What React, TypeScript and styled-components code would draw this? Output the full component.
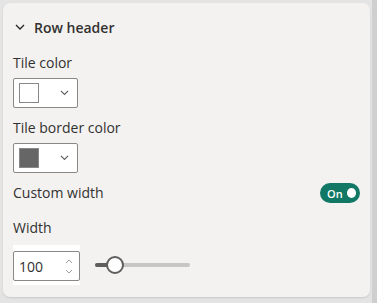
import { useState } from 'react';
import styled, { createGlobalStyle } from 'styled-components';

const GlobalStyle = createGlobalStyle`
	html, body {
		margin: 0;
		padding: 0;
		background: #e4e4e4;
		font-family: 'Open Sans', 'Noto Sans', sans-serif;
		color: #252423;
	}
`;

const Frame = styled.div`
	display: flex;
	width: 377px;
	height: 303px;
	box-sizing: border-box;
`;

const Panel = styled.section`
	margin: 3px 0 0 3px;
	width: 367px;
	height: 294px;
	box-sizing: border-box;
	background: #f3f2f1;
	border-radius: 7px;
	box-shadow: 0 1px 2px rgba(0, 0, 0, 0.12);
	padding: 12px 10px 0 10px;
	display: flex;
	flex-direction: column;
`;

const Rail = styled.div`
	margin-left: auto;
	width: 5px;
	height: 100%;
	background: #cfcfcf;
`;

const Header = styled.button`
	display: flex;
	align-items: center;
	gap: 9px;
	border: none;
	background: none;
	padding: 0 0 0 2px;
	height: 24px;
	font-family: inherit;
	font-size: 14px;
	font-weight: 600;
	color: #323130;
	cursor: pointer;
`;

const Label = styled.div<{ $top: number }>`
	margin-top: ${(p) => p.$top}px;
	font-size: 14px;
	line-height: 20px;
	color: #323130;
`;

const ColorPicker = styled.button`
	margin-top: 5px;
	width: 65px;
	height: 30px;
	box-sizing: border-box;
	display: flex;
	align-items: center;
	justify-content: space-between;
	padding: 0 8px 0 5px;
	background: #fff;
	border: 1px solid #8a8886;
	border-radius: 2px;
	cursor: pointer;
`;

const Swatch = styled.span<{ $color: string }>`
	width: 20px;
	height: 20px;
	box-sizing: border-box;
	background: ${(p) => p.$color};
	border: 1px solid #8a8886;
`;

const ToggleRow = styled.div`
	display: flex;
	align-items: center;
	justify-content: space-between;
	margin-top: 10px;
`;

const Toggle = styled.button<{ $on: boolean }>`
	display: flex;
	align-items: center;
	gap: 4px;
	height: 20px;
	width: 40px;
	box-sizing: border-box;
	padding: 0 4px 0 7px;
	border: none;
	border-radius: 10px;
	background: ${(p) => (p.$on ? '#117865' : '#8a8886')};
	color: #fff;
	font-family: inherit;
	font-size: 11px;
	font-weight: 600;
	cursor: pointer;
`;

const Knob = styled.span`
	width: 10px;
	height: 10px;
	border-radius: 50%;
	background: #fff;
`;

const WidthRow = styled.div`
	display: flex;
	align-items: center;
	gap: 15px;
	margin-top: 7px;
`;

const SpinWrap = styled.div`
	background: #fff;
	padding: 6px 0 4px 0;
`;

const SpinBox = styled.div`
	width: 67px;
	height: 30px;
	box-sizing: border-box;
	display: flex;
	align-items: center;
	justify-content: space-between;
	padding: 0 6px 0 5px;
	border: 1px solid #8a8886;
	border-radius: 2px;
	font-size: 14px;
	color: #323130;
`;

const Arrows = styled.div`
	display: flex;
	flex-direction: column;
	gap: 5px;
`;

const Slider = styled.div`
	position: relative;
	width: 95px;
	height: 4px;
	border-radius: 2px;
	background: #c8c6c4;
`;

const SliderFill = styled.div`
	height: 100%;
	border-radius: 2px 0 0 2px;
	background: #605e5c;
`;

const Thumb = styled.div`
	position: absolute;
	top: -7px;
	width: 14px;
	height: 14px;
	margin-left: -8px;
	border-radius: 50%;
	background: #fff;
	border: 2px solid #605e5c;
`;

const Chevron = ({ size = 10, color = '#323130' }: { size?: number; color?: string }) => (
	<svg width={size} height={size * 0.6} viewBox="0 0 10 6">
		<path d="M1 1l4 4 4-4" fill="none" stroke={color} strokeWidth="1.3" />
	</svg>
);

const App = () => {
	const [on, setOn] = useState(true);
	const pct = 20;

	return (
		<>
			<GlobalStyle />
			<Frame>
				<Panel>
					<Header>
						<Chevron size={10} color="#252423" />
						Row header
					</Header>
					<Label $top={14}>Tile color</Label>
					<ColorPicker>
						<Swatch $color="#ffffff" />
						<Chevron size={9} color="#605e5c" />
					</ColorPicker>
					<Label $top={10}>Tile border color</Label>
					<ColorPicker>
						<Swatch $color="#666666" />
						<Chevron size={9} color="#605e5c" />
					</ColorPicker>
					<ToggleRow>
						<Label $top={0}>Custom width</Label>
						<Toggle $on={on} onClick={() => setOn(!on)}>
							On
							<Knob />
						</Toggle>
					</ToggleRow>
					<Label $top={15}>Width</Label>
					<WidthRow>
						<SpinWrap>
							<SpinBox>
								100
								<Arrows>
									<svg width="8" height="5" viewBox="0 0 8 5">
										<path d="M1 4l3-3 3 3" fill="none" stroke="#a19f9d" strokeWidth="1" />
									</svg>
									<svg width="8" height="5" viewBox="0 0 8 5">
										<path d="M1 1l3 3 3-3" fill="none" stroke="#a19f9d" strokeWidth="1" />
									</svg>
								</Arrows>
							</SpinBox>
						</SpinWrap>
						<Slider>
							<SliderFill style={{ width: `${pct}%` }} />
							<Thumb style={{ left: `${pct}%` }} />
						</Slider>
					</WidthRow>
				</Panel>
				<Rail />
			</Frame>
		</>
	);
};

export default App;
